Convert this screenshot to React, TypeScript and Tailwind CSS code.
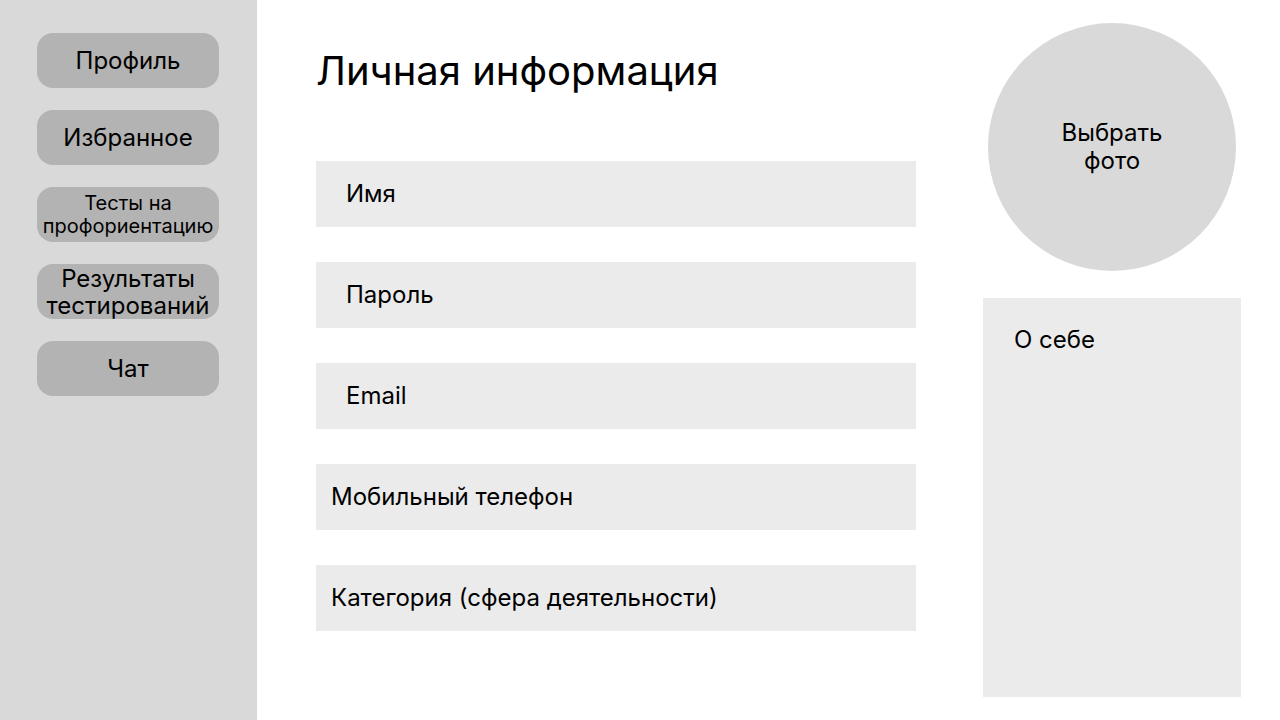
import React from 'react';

const menu = [
  { label: 'Профиль', small: false },
  { label: 'Избранное', small: false },
  { label: 'Тесты на профориентацию', small: true },
  { label: 'Результаты тестирований', small: false },
  { label: 'Чат', small: false },
];

const fields = [
  { label: 'Имя', pad: 'pl-[30px]' },
  { label: 'Пароль', pad: 'pl-[30px]' },
  { label: 'Email', pad: 'pl-[30px]' },
  { label: 'Мобильный телефон', pad: 'pl-[15px]' },
  { label: 'Категория (сфера деятельности)', pad: 'pl-[15px]' },
];

export default function App() {
  return (
    <div className="flex h-[720px] w-[1280px] overflow-hidden bg-white text-black font-['Inter',sans-serif] font-[370]">
      {/* sidebar */}
      <aside className="flex w-[257px] shrink-0 flex-col items-start gap-[22px] bg-[#d9d9d9] pl-[37px] pt-[33px]">
        {menu.map((item) => (
          <button
            key={item.label}
            className={
              item.small
                ? 'flex h-[55px] w-[182px] items-center justify-center rounded-[16px] bg-[#b3b3b3] text-center text-[20px] leading-[23px]'
                : 'flex h-[55px] w-[182px] items-center justify-center rounded-[16px] bg-[#b3b3b3] text-center text-[24px] leading-[27px]'
            }
          >
            {item.label}
          </button>
        ))}
      </aside>

      {/* form */}
      <main className="ml-[59px] flex w-[600px] shrink-0 flex-col">
        <h1 className="mt-[46px] text-[40px] leading-[50px] font-[370]">Личная информация</h1>
        <div className="mt-[65px] flex flex-col gap-[35px]">
          {fields.map((f) => (
            <div
              key={f.label}
              className={`flex h-[66px] w-[600px] items-center bg-[#ebebeb] text-[24px] ${f.pad}`}
            >
              {f.label}
            </div>
          ))}
        </div>
      </main>

      {/* right column */}
      <section className="ml-[67px] flex w-[258px] shrink-0 flex-col items-center pt-[23px]">
        <div className="flex h-[248px] w-[248px] items-center justify-center rounded-full bg-[#d9d9d9] text-center text-[24px] leading-[28px]">
          Выбрать
          <br />
          фото
        </div>
        <div className="mt-[27px] h-[399px] w-[258px] bg-[#ebebeb] pl-[31px] pt-[27px] text-[24px] leading-[29px]">
          О себе
        </div>
      </section>
    </div>
  );
}
